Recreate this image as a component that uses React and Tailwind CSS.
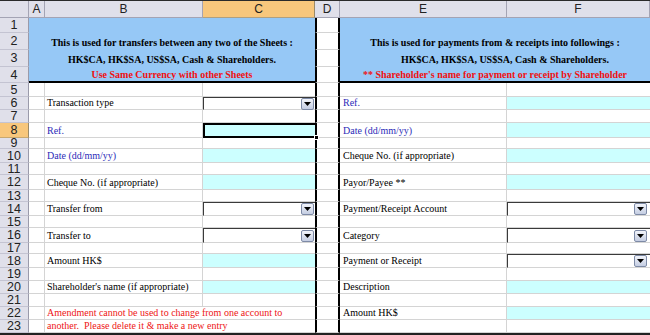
import React from "react";

const SERIF = "font-['Liberation_Serif',serif]";
const SANS = "font-['Liberation_Sans',Arial,sans-serif]";

function ColHead({ children, sel }) {
  return (
    <div
      className={
        sel
          ? `flex items-center justify-center border-r border-b border-r-[#9a8a6a] border-b-[#b0a080] bg-[#f8c77c] text-[12px] leading-none text-[#222] ${SANS}`
          : `flex items-center justify-center border-r border-b border-r-[#a4a4b4] border-b-[#a4a4b4] bg-[#e0e0ea] text-[12px] leading-none text-[#222] ${SANS}`
      }
    >
      {children}
    </div>
  );
}

function RowHead({ n, sel }) {
  return (
    <div
      className={
        sel
          ? `flex items-center justify-center border-r border-b border-r-[#9a8a6a] border-b-[#c8a870] bg-[#f8c77c] text-[12.5px] leading-[10px] text-[#222] ${SANS}`
          : `flex items-center justify-center border-r border-b border-r-[#9a9aaa] border-b-[#c4c4d2] bg-[#e0e0ea] text-[12.5px] leading-[10px] text-[#222] ${SANS}`
      }
    >
      {n}
    </div>
  );
}

function DropBtn() {
  return (
    <div className="mr-[1px] flex h-[12px] w-[13px] items-center justify-center rounded-[2px] border border-[#7d8aa6] bg-linear-to-b from-[#f2f4fa] to-[#c4cde2]">
      <svg width="7" height="4" viewBox="0 0 7 4">
        <path d="M0 0h7L3.5 4z" fill="#000" />
      </svg>
    </div>
  );
}

function Label({ text, color }) {
  const cls =
    color === "blue"
      ? `flex items-end pl-[2px] pb-[1px] border-r border-b border-[#d4d4d4] text-[10px] leading-none whitespace-nowrap text-[#2b2bb8] ${SERIF}`
      : `flex items-end pl-[2px] pb-[1px] border-r border-b border-[#d4d4d4] text-[10px] leading-none whitespace-nowrap text-black ${SERIF}`;
  return <div className={cls}>{text}</div>;
}

function ELabel({ text, color }) {
  const cls =
    color === "blue"
      ? `flex items-end pl-[3px] pb-[1px] border-r border-b border-[#d4d4d4] text-[10px] leading-none whitespace-nowrap text-[#2b2bb8] ${SERIF}`
      : `flex items-end pl-[3px] pb-[1px] border-r border-b border-[#d4d4d4] text-[10px] leading-none whitespace-nowrap text-black ${SERIF}`;
  return <div className={cls}>{text}</div>;
}

function ValCell({ type }) {
  if (type === "cyan") return <div className="border-b border-[#d4d4d4] bg-[#ccffff]" />;
  if (type === "drop")
    return (
      <div className="flex items-center justify-end border-t border-l border-[#3a3a3a] border-b border-b-[#d4d4d4]">
        <DropBtn />
      </div>
    );
  if (type === "sel")
    return (
      <div className="relative border-t-2 border-b-2 border-l-2 border-black bg-[#ccffff]">
        <div className="absolute -right-[4px] -bottom-[4px] z-10 h-[5px] w-[5px] border border-white bg-black" />
      </div>
    );
  return <div className="border-b border-[#d4d4d4]" />;
}

function FCell({ type }) {
  if (type === "cyan") return <div className="border-b border-[#d4d4d4] bg-[#ccffff]" />;
  if (type === "drop")
    return (
      <div className="flex items-center justify-end pr-[2px] border-t border-l border-[#3a3a3a] border-b border-b-[#d4d4d4]">
        <DropBtn />
      </div>
    );
  return <div className="border-b border-[#d4d4d4]" />;
}

function DCell() {
  return <div className="border-x-2 border-x-black border-b border-b-[#d4d4d4]" />;
}

function ACell() {
  return <div className="border-r border-b border-[#d4d4d4]" />;
}

const rows = [
  { n: 5 },
  { n: 6, b: "Transaction type", c: "drop", e: "Ref.", ec: "blue", f: "cyan" },
  { n: 7 },
  { n: 8, b: "Ref.", bc: "blue", c: "sel", e: "Date (dd/mm/yy)", ec: "blue", f: "cyan" },
  { n: 9 },
  { n: 10, b: "Date (dd/mm/yy)", bc: "blue", c: "cyan", e: "Cheque No. (if appropriate)", f: "cyan" },
  { n: 11 },
  { n: 12, b: "Cheque No. (if appropriate)", c: "cyan", e: "Payor/Payee **", f: "cyan" },
  { n: 13 },
  { n: 14, b: "Transfer from", c: "drop", e: "Payment/Receipt Account", f: "drop" },
  { n: 15 },
  { n: 16, b: "Transfer to", c: "drop", e: "Category", f: "drop" },
  { n: 17 },
  { n: 18, b: "Amount HK$", c: "cyan", e: "Payment or Receipt", f: "drop" },
  { n: 19 },
  { n: 20, b: "Shareholder's name (if appropriate)", c: "cyan", e: "Description", f: "cyan" },
  { n: 21 },
  { n: 22, red: "Amendment cannot be used to change from one account to", e: "Amount HK$", f: "cyan" },
  { n: 23, red: "another.  Please delete it & make a new entry" },
];

export default function App() {
  return (
    <div className="h-[335px] w-[650px] overflow-hidden border-t border-[#2a2a2a] bg-white">
      <div className="grid grid-cols-[29px_16px_158px_112px_25px_167px_143px] grid-rows-[17px_15px_17px_17px_16px_14px_13px_13px_15px_11px_14px_12px_15px_12px_14px_12px_15px_11px_14px_13px_13px_13px_13px_13px]">
        {/* header */}
        <ColHead />
        <ColHead>A</ColHead>
        <ColHead>B</ColHead>
        <ColHead sel>C</ColHead>
        <ColHead>D</ColHead>
        <ColHead>E</ColHead>
        <ColHead>F</ColHead>

        {/* row 1 */}
        <RowHead n={1} />
        <div className="col-span-3 bg-[#96c8f6]" />
        <DCell />
        <div className="col-span-2 bg-[#96c8f6]" />

        {/* row 2 */}
        <RowHead n={2} />
        <div className={`col-span-3 flex items-end justify-center pb-[2px] bg-[#96c8f6] text-[10px] font-bold leading-none whitespace-nowrap text-black ${SERIF}`}>
          This is used for transfers between any two of the Sheets :
        </div>
        <DCell />
        <div className={`col-span-2 flex items-end justify-center pb-[2px] bg-[#96c8f6] text-[10px] font-bold leading-none whitespace-nowrap text-black ${SERIF}`}>
          This is used for payments from &amp; receipts into followings :
        </div>

        {/* row 3 */}
        <RowHead n={3} />
        <div className={`col-span-3 flex items-end justify-center pb-[2px] bg-[#96c8f6] text-[10px] font-bold leading-none whitespace-nowrap text-black ${SERIF}`}>
          HK$CA, HK$SA, US$SA, Cash &amp; Shareholders.
        </div>
        <DCell />
        <div className={`col-span-2 flex items-end justify-center pl-[20px] pb-[2px] bg-[#96c8f6] text-[10px] font-bold leading-none whitespace-nowrap text-black ${SERIF}`}>
          HK$CA, HK$SA, US$SA, Cash &amp; Shareholders.
        </div>

        {/* row 4 */}
        <RowHead n={4} />
        <div className={`col-span-3 flex items-end justify-center pb-[1px] border-b-2 border-black bg-[#96c8f6] text-[10px] font-bold leading-none whitespace-nowrap text-[#f01010] ${SERIF}`}>
          Use Same Currency with other Sheets
        </div>
        <DCell />
        <div className={`col-span-2 flex items-end justify-center pb-[1px] border-b-2 border-black bg-[#96c8f6] text-[10px] font-bold leading-none whitespace-nowrap text-[#f01010] ${SERIF}`}>
          ** Shareholder&apos;s name for payment or receipt by Shareholder
        </div>

        {rows.map((r) => (
          <React.Fragment key={r.n}>
            <RowHead n={r.n} sel={r.n === 8} />
            <ACell />
            {r.red ? (
              <div className={`col-span-2 flex items-end pl-[2px] pb-[1px] border-b border-[#d4d4d4] text-[10px] leading-none whitespace-pre text-[#ee1515] ${SERIF}`}>
                {r.red}
              </div>
            ) : (
              <>
                <Label text={r.b} color={r.bc} />
                <ValCell type={r.c} />
              </>
            )}
            <DCell />
            <ELabel text={r.e} color={r.ec} />
            <FCell type={r.f} />
          </React.Fragment>
        ))}
      </div>
      <div className="h-[2px] bg-[#222]" />
    </div>
  );
}
